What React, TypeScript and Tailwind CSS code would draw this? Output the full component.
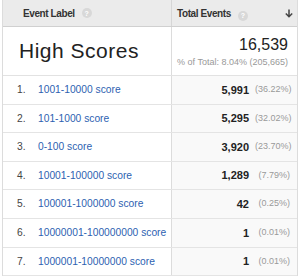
import React from "react";

const rows = [
  ["1.", "1001-10000 score", "5,991", "(36.22%)"],
  ["2.", "101-1000 score", "5,295", "(32.02%)"],
  ["3.", "0-100 score", "3,920", "(23.70%)"],
  ["4.", "10001-100000 score", "1,289", "(7.79%)"],
  ["5.", "100001-1000000 score", "42", "(0.25%)"],
  ["6.", "10000001-100000000 score", "1", "(0.01%)"],
  ["7.", "1000001-10000000 score", "1", "(0.01%)"],
];

function Help() {
  return (
    <span className="inline-flex items-center justify-center w-[10px] h-[10px] rounded-full bg-[#d8d8d8] text-white text-[7px] font-bold leading-none">
      ?
    </span>
  );
}

export default function App() {
  return (
    <div className="w-[300px] h-[276px] bg-white overflow-hidden" style={{ fontFamily: '"Liberation Sans", Arial, sans-serif' }}>
      <div className="ml-[2px] w-[296px] border-l border-r border-[#dcdcdc]">
        <div className="flex h-[27px] bg-[#ebebeb] border-b border-[#d0d0d0]">
          <div className="w-[169px] shrink-0 flex items-center pl-[20px] gap-[7px] border-r border-[#d6d6d6]">
            <span className="text-[10px] font-bold text-[#333] tracking-[-0.4px]">Event Label</span>
            <Help />
          </div>
          <div className="flex-1 flex items-center pl-[5px] pr-[4px]">
            <span className="text-[10px] font-bold text-[#333] tracking-[-0.4px]">Total Events</span>
            <span className="ml-[7px]"><Help /></span>
            <svg className="ml-auto" width="8" height="9" viewBox="0 0 8 9">
              <path d="M4 0.5v7M0.8 4.5l3.2 3.2 3.2-3.2" stroke="#444" strokeWidth="1.5" fill="none" />
            </svg>
          </div>
        </div>
        <div className="flex h-[49px] border-b border-[#e2e2e2]">
          <div className="w-[169px] shrink-0 flex items-start pt-[13px] pl-[16px] border-r border-[#dcdcdc]">
            <span className="text-[21px] leading-[21px] text-[#222] tracking-[0.5px]">High Scores</span>
          </div>
          <div className="flex-1 flex flex-col items-end pt-[10px] pr-[9px]">
            <span className="text-[16px] leading-[16px] text-[#222]">16,539</span>
            <span className="text-[9px] leading-[10px] text-[#999] mt-[4px]">% of Total: 8.04% (205,665)</span>
          </div>
        </div>
        {rows.map((r) => (
          <div key={r[0]} className="flex h-[28.6px] border-b border-[#e4e4e4]">
            <div className="w-[169px] shrink-0 flex items-center border-r border-[#dcdcdc] whitespace-nowrap">
              <span className="w-[35px] shrink-0 pl-[14px] text-[10.25px] text-[#444]">{r[0]}</span>
              <span className="text-[10.25px] text-[#2d5fb1]">{r[1]}</span>
            </div>
            <div className="flex-1 flex items-center justify-end bg-[#f9f9f9] pr-[7px] gap-[6px]">
              <span className="text-[11px] font-bold text-[#222]">{r[2]}</span>
              <span className="w-[35px] text-right text-[9px] text-[#999]">{r[3]}</span>
            </div>
          </div>
        ))}
      </div>
    </div>
  );
}
